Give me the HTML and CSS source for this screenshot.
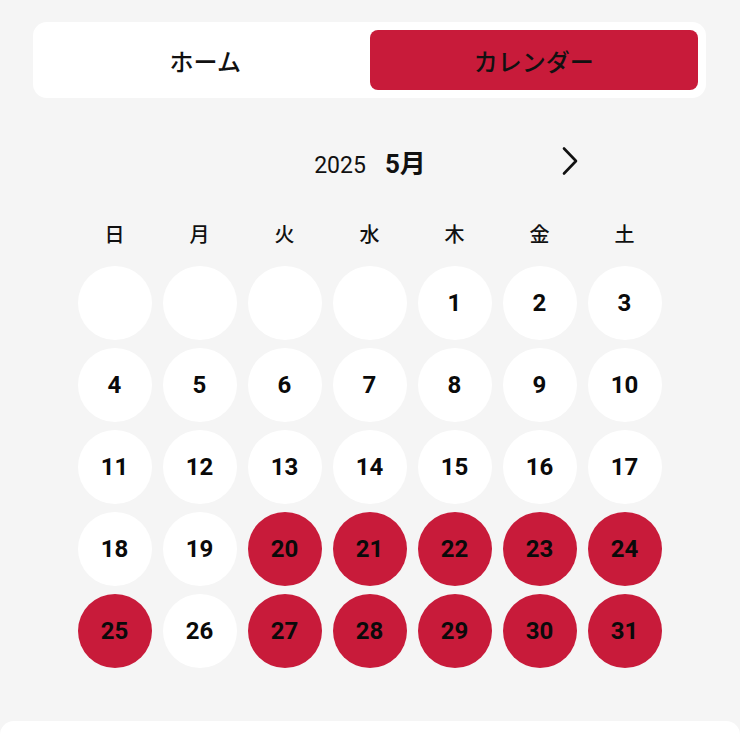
FILE: index.html
```html
<!DOCTYPE html>
<html lang="ja">
<head>
<meta charset="utf-8">
<title>カレンダー</title>
<link rel="stylesheet" href="styles.css">
</head>
<body>
<div class="page">
  <nav class="tabs">
    <button class="tab">ホーム</button>
    <button class="tab tab-active">カレンダー</button>
  </nav>

  <header class="month-header">
    <span class="nav-spacer"></span>
    <div class="month-title"><span class="year">2025</span><span class="month">5月</span></div>
    <button class="nav-next" aria-label="次の月">
      <svg width="18" height="30" viewBox="0 0 18 30"><path d="M3 2.5 L15 15 L3 27.5" fill="none" stroke="#111" stroke-width="2.6" stroke-linecap="round" stroke-linejoin="round"/></svg>
    </button>
  </header>

  <div class="weekdays">
    <span>日</span><span>月</span><span>火</span><span>水</span><span>木</span><span>金</span><span>土</span>
  </div>

  <div class="days">
    <div class="day"></div><div class="day"></div><div class="day"></div><div class="day"></div>
    <div class="day">1</div><div class="day">2</div><div class="day">3</div>
    <div class="day">4</div><div class="day">5</div><div class="day">6</div><div class="day">7</div>
    <div class="day">8</div><div class="day">9</div><div class="day">10</div>
    <div class="day">11</div><div class="day">12</div><div class="day">13</div><div class="day">14</div>
    <div class="day">15</div><div class="day">16</div><div class="day">17</div>
    <div class="day">18</div><div class="day">19</div><div class="day marked">20</div><div class="day marked">21</div>
    <div class="day marked">22</div><div class="day marked">23</div><div class="day marked">24</div>
    <div class="day marked">25</div><div class="day">26</div><div class="day marked">27</div><div class="day marked">28</div>
    <div class="day marked">29</div><div class="day marked">30</div><div class="day marked">31</div>
  </div>

  <section class="sheet"></section>
</div>
</body>
</html>
```

FILE: styles.css
```css
* { box-sizing: border-box; }

html, body {
  margin: 0;
  padding: 0;
  background: #f5f5f5;
  color: #111;
  font-family: Roboto, "Noto Sans CJK JP", sans-serif;
}

.page {
  width: 740px;
  height: 740px;
  overflow: hidden;
  padding-top: 22px;
  display: flex;
  flex-direction: column;
}

.tabs {
  margin: 0 34px 0 33px;
  padding: 8px;
  background: #fff;
  border-radius: 14px;
  display: grid;
  grid-template-columns: 1fr 1fr;
}

.tab {
  height: 60px;
  border: 0;
  border-radius: 8px;
  background: transparent;
  font-family: "Noto Sans CJK JP", sans-serif;
  font-size: 24px;
  font-weight: 500;
  color: #111;
  padding: 0;
}

.tab-active {
  background: #c81b3a;
}

.month-header {
  width: 440px;
  height: 50px;
  margin: 38px auto 0;
  display: flex;
  align-items: center;
  justify-content: space-between;
}

.nav-spacer { width: 40px; }

.month-title {
  display: flex;
  align-items: baseline;
  gap: 19px;
}

.year {
  font-size: 23px;
  font-weight: 400;
}

.month {
  font-size: 26px;
  font-weight: 700;
}

.nav-next {
  width: 40px;
  height: 40px;
  border: 0;
  background: transparent;
  padding: 0;
  display: flex;
  align-items: center;
  justify-content: center;
}

.weekdays {
  width: 595px;
  margin: 32px 0 0 72px;
  display: grid;
  grid-template-columns: repeat(7, 1fr);
  height: 30px;
  align-items: center;
  text-align: center;
  font-family: "Noto Sans CJK JP", sans-serif;
  font-size: 20px;
  font-weight: 500;
}

.days {
  width: 595px;
  margin: 18px 0 0 72px;
  display: grid;
  grid-template-columns: repeat(7, 85px);
  grid-auto-rows: 74px;
  row-gap: 8px;
  justify-items: center;
}

.day {
  width: 74px;
  height: 74px;
  border-radius: 50%;
  background: #fff;
  display: flex;
  align-items: center;
  justify-content: center;
  font-size: 24px;
  font-weight: 700;
  color: #0a0a0a;
}

.day.marked {
  background: #c81b3a;
}

.sheet {
  margin-top: 53px;
  flex: 1;
  background: #fff;
  border-radius: 14px 14px 0 0;
}
```
